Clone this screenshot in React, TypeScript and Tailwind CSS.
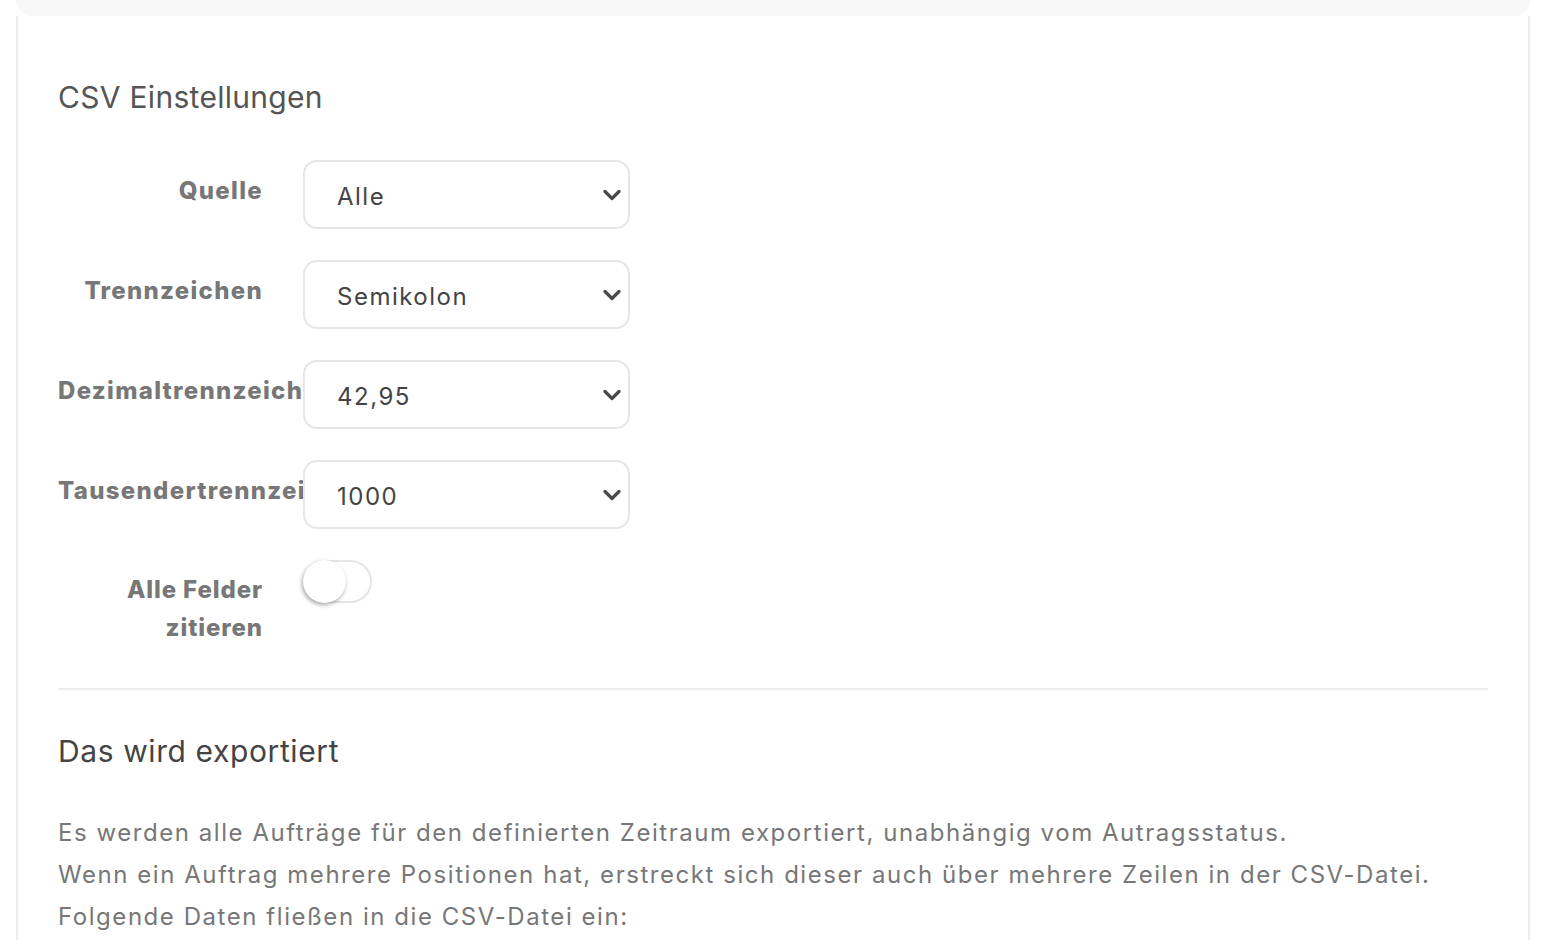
import { useState } from "react";

const FONT = "font-['Inter','Open_Sans',sans-serif]";

interface SelectRowProps {
  label: string;
  value: string;
  options: string[];
}

function Chevron() {
  return (
    <svg
      width="18"
      height="12"
      viewBox="0 0 18 12"
      className="pointer-events-none absolute right-[9px] top-1/2 -translate-y-1/2"
    >
      <polyline
        points="2,2.5 9,9.5 16,2.5"
        fill="none"
        stroke="#4a4a4a"
        strokeWidth="3.2"
        strokeLinecap="round"
        strokeLinejoin="round"
      />
    </svg>
  );
}

function SelectRow({ label, value, options }: SelectRowProps) {
  const [current, setCurrent] = useState(value);
  return (
    <div className="flex items-start">
      <label className="w-[245px] shrink-0 pr-[40px] pt-[12px] text-right text-[24px] font-extrabold leading-[38px] tracking-[1.3px] text-[#777] whitespace-nowrap">
        {label}
      </label>
      <div className="relative w-[327px] shrink-0">
        <select
          value={current}
          onChange={(e) => setCurrent(e.target.value)}
          className="h-[69px] w-full appearance-none rounded-[14px] border-2 border-[#e6e6e6] bg-white pl-[32px] pr-10 pt-[4px] text-[24px] tracking-[1.5px] text-[#444] outline-none"
        >
          {options.map((o) => (
            <option key={o} value={o}>
              {o}
            </option>
          ))}
        </select>
        <Chevron />
      </div>
    </div>
  );
}

export default function App() {
  const [quoteAll, setQuoteAll] = useState(false);

  return (
    <div className={`min-h-screen bg-white ${FONT}`}>
      {/* end of the card above */}
      <div className="mx-4 h-4 rounded-b-[18px] bg-[#f8f8f8]" />

      <div className="mx-4 min-h-[924px] border-x-2 border-[#ececec] px-10 pt-[63px]">
        <h2 className="text-[30px] leading-[36px] tracking-[0.3px] text-[#555]">CSV Einstellungen</h2>

        <div className="mt-[45px] flex flex-col gap-[31px]">
          <SelectRow label="Quelle" value="Alle" options={["Alle", "Shop", "Marktplatz"]} />
          <SelectRow label="Trennzeichen" value="Semikolon" options={["Semikolon", "Komma", "Tabulator"]} />
          <SelectRow label="Dezimaltrennzeichen" value="42,95" options={["42,95", "42.95"]} />
          <SelectRow label="Tausendertrennzeichen" value="1000" options={["1000", "1.000", "1,000"]} />

          <div className="flex items-start">
            <label className="w-[245px] shrink-0 pr-[40px] pt-[11px] text-right text-[24px] font-extrabold leading-[38px] tracking-[0.9px] text-[#777]">
              Alle Felder zitieren
            </label>
            <button
              type="button"
              onClick={() => setQuoteAll(!quoteAll)}
              className={`relative h-[43px] w-[69px] rounded-full border-2 ${
                quoteAll ? "border-[#4caf50] bg-[#4caf50]" : "border-[#e6e6e6] bg-white"
              }`}
            >
              <span
                className={`absolute top-[-2px] h-[43px] w-[43px] rounded-full bg-white shadow-[-1px_2px_4px_rgba(0,0,0,0.35)] ${
                  quoteAll ? "left-[24px]" : "left-[-2px]"
                }`}
              />
            </button>
          </div>
        </div>

        <div className="mt-[41px] h-[2px] bg-[#ededed]" />

        <h2 className="mt-[43px] text-[30px] leading-[36px] tracking-[0.6px] text-[#444]">Das wird exportiert</h2>

        <p className="mt-[43px] text-[24px] leading-[42px] tracking-[1.55px] text-[#777]">
          Es werden alle Aufträge für den definierten Zeitraum exportiert, unabhängig vom Autragsstatus.
          <br />
          Wenn ein Auftrag mehrere Positionen hat, erstreckt sich dieser auch über mehrere Zeilen in der CSV-Datei.
          <br />
          Folgende Daten fließen in die CSV-Datei ein:
        </p>
      </div>
    </div>
  );
}
